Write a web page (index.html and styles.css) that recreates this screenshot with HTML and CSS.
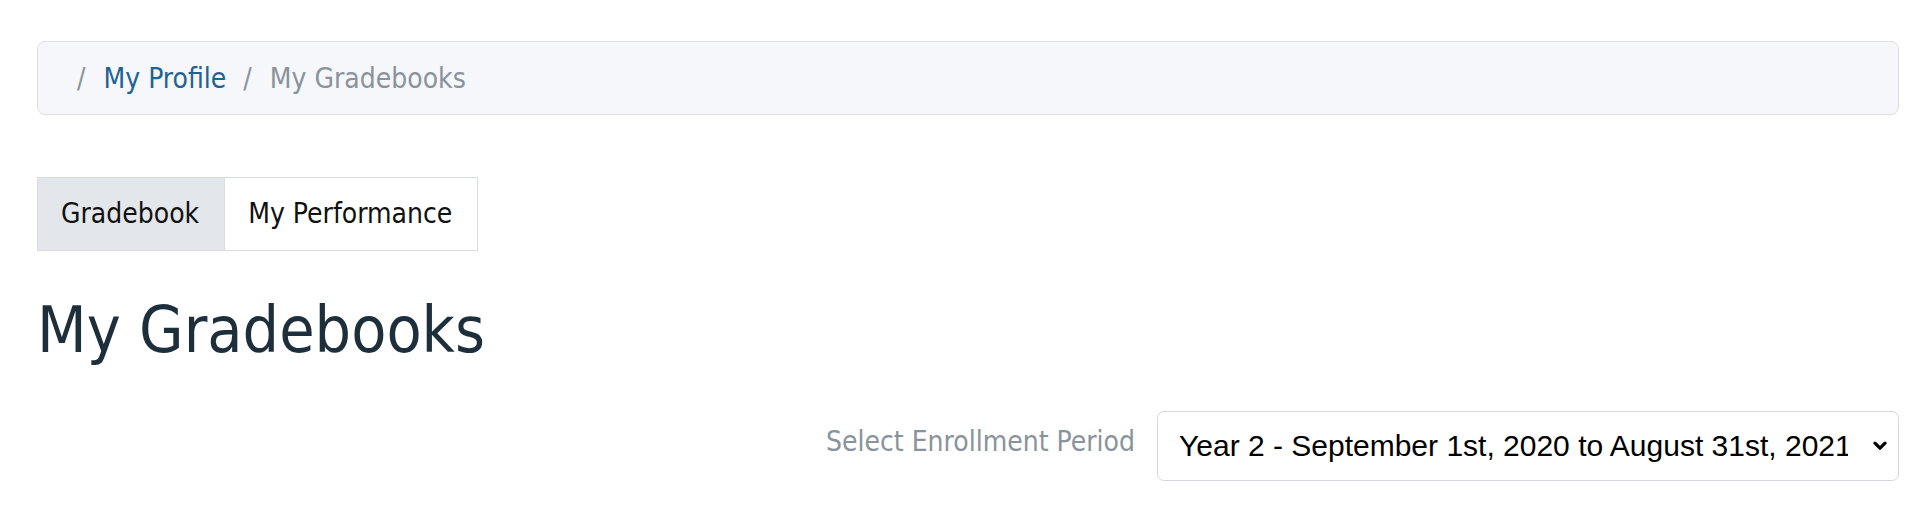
FILE: index.html
```html
<!DOCTYPE html>
<html lang="en">
<head>
<meta charset="utf-8">
<title>My Gradebooks</title>
<link rel="stylesheet" href="styles.css">
</head>
<body>
<div class="page">
  <nav class="breadcrumb">
    <span class="crumb"><a href="#">My Profile</a></span>
    <span class="crumb current">My Gradebooks</span>
  </nav>

  <div class="tabs">
    <a class="tab active" href="#">Gradebook</a>
    <a class="tab" href="#">My Performance</a>
  </div>

  <h2 class="title">My Gradebooks</h2>

  <div class="period-row">
    <label class="period-label" for="period">Select Enrollment Period</label>
    <span class="select-wrap">
      <select id="period" class="period-select">
        <option>Year 2 - September 1st, 2020 to August 31st, 2021</option>
      </select>
      <svg class="chevron" width="14" height="10" viewBox="0 0 14 10" aria-hidden="true">
        <path d="M2 2.2 L7 7.2 L12 2.2" fill="none" stroke="#000" stroke-width="3.2" stroke-linecap="round" stroke-linejoin="round"/>
      </svg>
    </span>
  </div>
</div>
</body>
</html>
```

FILE: styles.css
```css
html, body {
  margin: 0;
  padding: 0;
  background: #ffffff;
}

body {
  font-family: "DejaVu Sans Condensed", "DejaVu Sans", sans-serif;
  font-stretch: condensed;
  font-size: 28px;
  color: #111;
}

.page {
  padding: 41px 33px 0 37px;
}

.breadcrumb {
  display: flex;
  align-items: center;
  background: #f6f7fb;
  border: 1px solid #dcdfe4;
  border-radius: 8px;
  padding: 21px 39px 19px;
  line-height: 32px;
  color: #8a939b;
}

.crumb::before {
  content: "/";
  color: #8a939b;
  padding-right: 18px;
}

.crumb + .crumb {
  margin-left: 17px;
}

.crumb a {
  color: #1f6396;
  text-decoration: none;
}

.crumb.current {
  color: #8a939b;
}

.tabs {
  display: flex;
  margin-top: 62px;
}

.tab {
  display: block;
  border: 1px solid #d9dde1;
  padding: 0 25px 0 23px;
  line-height: 72px;
  color: #111;
  text-decoration: none;
  background: #ffffff;
}

.tab + .tab {
  margin-left: -1px;
}

.tab.active {
  background: #e3e7eb;
}

.title {
  margin: 41px 0 0 0;
  font-size: 64px;
  font-weight: normal;
  line-height: 1.2;
  color: #1d2f3b;
}

.period-row {
  display: flex;
  justify-content: flex-end;
  align-items: center;
  margin-top: 42px;
}

.period-label {
  color: #8a939b;
  margin-right: 22px;
  padding-bottom: 8px;
}

.select-wrap {
  position: relative;
  display: block;
}

.period-select {
  display: block;
  appearance: none;
  -webkit-appearance: none;
  box-sizing: border-box;
  width: 742px;
  height: 70px;
  margin: 0;
  padding: 0 50px 0 21px;
  font-family: "Liberation Sans", Arial, sans-serif;
  font-stretch: normal;
  font-size: 30px;
  color: #000;
  background: #ffffff;
  border: 1px solid #d5d8dc;
  border-radius: 7px;
}

.chevron {
  position: absolute;
  right: 12px;
  top: 30px;
  pointer-events: none;
}
```
